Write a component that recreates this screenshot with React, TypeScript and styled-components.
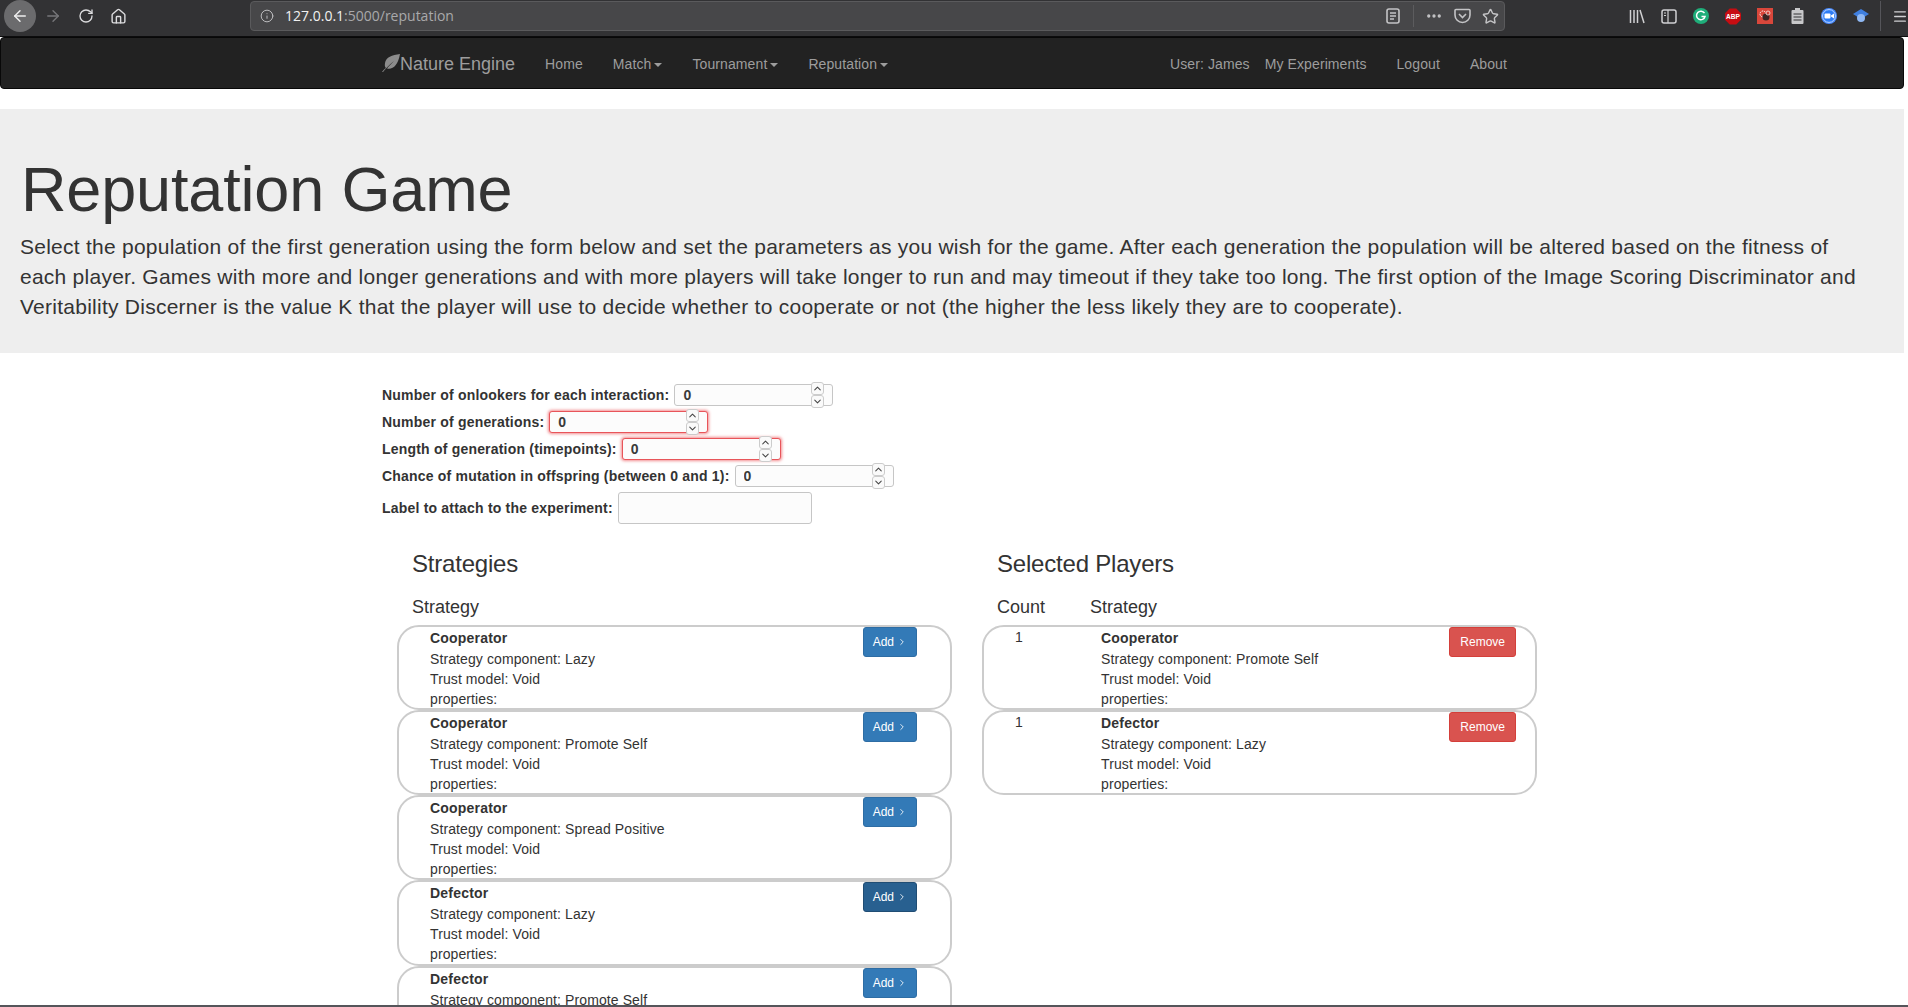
import React from "react";
import styled, { createGlobalStyle } from "styled-components";
import { ArrowLeft, ArrowRight, RotateCw, Home, Info as InfoIcon, MoreHorizontal, Star, Menu, ChevronUp, ChevronDown, ChevronRight } from "lucide-react";

const Global = createGlobalStyle`
  html, body { margin: 0; padding: 0; height: 100%; overflow: hidden; background: #fff; }
  body { font-family: "Liberation Sans", Arial, sans-serif; font-size: 14px; line-height: 20px; color: #333; letter-spacing: .1px; }
  * { box-sizing: border-box; }
`;

const Shell = styled.div`
  height: 1007px; display: flex; flex-direction: column; overflow: hidden;
`;
const Toolbar = styled.div`
  flex: 0 0 37px; height: 37px; background: #323234; display: flex; align-items: center; color: #d0d0d2; padding-bottom: 4px;
  border-bottom: 1px solid #0c0c0d; letter-spacing: 0;
`;
const BackCircle = styled.div`
  width: 32px; height: 32px; margin-left: 4px; border-radius: 50%; background: #6b6b6d; display: flex; align-items: center; justify-content: center; color: #eee;
`;
const NavIcon = styled.div<{ $dim?: boolean }>`
  width: 33px; display: flex; justify-content: center; color: ${(p) => (p.$dim ? "#77777a" : "#dcdcde")};
`;
const UrlBar = styled.div`
  margin-left: 115px; width: 1255px; height: 30px; background: #474749; border: 1px solid #5a5a5c; border-radius: 4px;
  display: flex; align-items: center; padding: 0 0 0 9px; font-size: 14px; color: #a9a9ab; font-family: "Open Sans", sans-serif;
`;
const UrlInfo = styled.span`display: flex; color: #c4c4c6;`;
const Host = styled.span`color: #f1f1f1; margin-left: 11px;`;
const UrlSpacer = styled.div`flex: 1;`;
const UrlDivider = styled.div`width: 1px; height: 22px; background: #5c5c5e; margin: 0 6px 0 6px;`;
const UrlIcon = styled.div`display: flex; align-items: center; color: #c4c4c6; width: 28px; justify-content: center;`;
const ToolIcons = styled.div`
  margin-left: auto; display: flex; align-items: center; gap: 16px;
`;
const ToolSlot = styled.div`width: 16px; height: 18px; display: flex; align-items: center; justify-content: center; color: #d0d0d2;`;
const ToolDivider = styled.div`width: 1px; height: 30px; background: #55555a; margin: 0 -5px;`;
const AbpText = styled.text`font: bold 7px "Liberation Sans", sans-serif; fill: #fff;`;

const Viewport = styled.div`flex: 1; min-height: 0; padding-right: 4px; overflow: hidden;`;

const Navbar = styled.nav`
  height: 52px; background: #222; border: 1px solid #080808; border-radius: 4px; margin-bottom: 20px;
`;
const NavContainer = styled.div`
  width: 1170px; margin: 0 auto; padding: 2px 15px 0; display: flex; height: 100%; align-items: center; color: #9d9d9d;
`;
const Brand = styled.a`
  font-size: 18px; line-height: 20px; padding-right: 15px; display: flex; align-items: center; color: #9d9d9d; letter-spacing: 0;
`;
const Leaf = styled.svg`flex: none; margin-top: -2px; color: #8c8c8c;`;
const NavLink = styled.a<{ $pad?: string }>`
  padding: ${(p) => p.$pad ?? "0 15px"}; white-space: nowrap; color: #9d9d9d; display: flex; align-items: center;
`;
const Caret = styled.span`
  display: inline-block; margin-left: 3px; margin-top: 1px; border-top: 4px solid #9d9d9d; border-left: 4px solid transparent; border-right: 4px solid transparent;
`;
const NavRight = styled.div`margin-left: auto; display: flex;`;

const Jumbotron = styled.header`
  height: 244px; background: #eee; padding: 46px 20px 0 20px;
`;
const Title = styled.h1`
  font-size: 63px; font-weight: 400; line-height: 69px; margin: 0 0 0 1px; color: #333; letter-spacing: -.16px;
`;
const Lead = styled.p`
  font-size: 21px; line-height: 30px; margin: 8px 0 0; color: #333; font-weight: 400; letter-spacing: .25px; max-width: 1845px;
`;

const Container = styled.div`width: 1170px; margin: 0 auto;`;
const Form = styled.form`padding: 28px 15px 0; display: flex; flex-direction: column;`;
const FormRow = styled.div<{ $h?: number }>`
  height: ${(p) => p.$h ?? 27}px; display: flex; align-items: center; gap: 5px;
`;
const Label = styled.label`font-weight: 700; white-space: nowrap; letter-spacing: .2px;`;
const NumWrap = styled.div<{ $invalid?: boolean }>`
  position: relative; width: 159px; height: 22px; border-radius: 3px; background: #fcfcfc;
  border: 1px solid ${(p) => (p.$invalid ? "#e8555a" : "#c6c6c6")};
  box-shadow: ${(p) => (p.$invalid ? "0 0 3px 1px rgba(235, 80, 85, .65)" : "none")};
`;
const NumInput = styled.input`
  width: 100%; height: 100%; border: 0; outline: 0; background: transparent; padding: 0 0 0 8px; font: 700 14px "Liberation Sans", sans-serif; color: #3a3a3a;
`;
const Spinner = styled.div`
  position: absolute; top: -3px; right: 8px; width: 13px; height: 25px; display: flex; flex-direction: column;
`;
const SpinBtn = styled.div`
  flex: 1; border: 1px solid #ccc; border-radius: 3px; background: #fafafa; display: flex; align-items: center; justify-content: center; color: #444;
`;
const TextInput = styled.input`
  width: 194px; height: 32px; border: 1px solid #c6c6c6; border-radius: 3px; background: #fcfcfc; outline: 0;
`;

const Columns = styled.div`
  display: grid; grid-template-columns: 555px 555px; gap: 30px; padding: 25px 0 0 30px;
`;
const Column = styled.section`display: flex; flex-direction: column;`;
const Heading = styled.h3`
  font-size: 24px; font-weight: 400; line-height: 26px; margin: 0 0 20px 15px; color: #333; letter-spacing: -.2px;
`;
const TableHead = styled.div`
  font-size: 18px; line-height: 20px; margin: 0 0 8px 15px; display: flex; color: #333; height: 20px; letter-spacing: 0;
`;
const CountHead = styled.span`width: 93px;`;
const Card = styled.div`
  height: 85.15px; flex: none; border: 2px solid #ccc; border-radius: 22px; display: flex; align-items: flex-start; background: #fff; overflow: hidden;
`;
const CountCell = styled.div`width: 117px; padding: 0 0 0 31px; line-height: 21px;`;
const Details = styled.div<{ $inset: number }>`
  margin-left: ${(p) => p.$inset}px; line-height: 20px;
`;
const Name = styled.div`font-weight: 700; letter-spacing: .2px; line-height: 22px;`;
const Action = styled.button<{ $kind: "add" | "active" | "remove"; $right: number; $pad: number }>`
  margin: 0 ${(p) => p.$right}px 0 auto; height: 30px; padding: 0 ${(p) => p.$pad}px; font: 12px/18px "Liberation Sans", sans-serif; color: #fff; border-radius: 3px; display: flex; align-items: center; gap: 3px;
  background: ${(p) => (p.$kind === "add" ? "#337ab7" : p.$kind === "active" ? "#286090" : "#d9534f")};
  border: 1px solid ${(p) => (p.$kind === "add" ? "#2e6da4" : p.$kind === "active" ? "#204d74" : "#d43f3a")};
`;
const BottomEdge = styled.div`flex: 0 0 2px; background: #55555a;`;

type Strat = { name: string; comp: string; kind?: "add" | "active" };
const strategies: Strat[] = [
  { name: "Cooperator", comp: "Lazy" },
  { name: "Cooperator", comp: "Promote Self" },
  { name: "Cooperator", comp: "Spread Positive" },
  { name: "Defector", comp: "Lazy", kind: "active" },
  { name: "Defector", comp: "Promote Self" },
];
const selected: Strat[] = [
  { name: "Cooperator", comp: "Promote Self" },
  { name: "Defector", comp: "Lazy" },
];

const Num = ({ label, invalid }: { label: string; invalid?: boolean }) => (
  <FormRow>
    <Label>{label}</Label>
    <NumWrap $invalid={invalid}>
      <NumInput readOnly value="0" />
      <Spinner>
        <SpinBtn><ChevronUp size={11} strokeWidth={2.2} /></SpinBtn>
        <SpinBtn><ChevronDown size={11} strokeWidth={2.2} /></SpinBtn>
      </Spinner>
    </NumWrap>
  </FormRow>
);

const StrategyDetails = ({ s, inset }: { s: Strat; inset: number }) => (
  <Details $inset={inset}>
    <Name>{s.name}</Name>
    <div>Strategy component: {s.comp}</div>
    <div>Trust model: Void</div>
    <div>properties:</div>
  </Details>
);

export default function App() {
  return (
    <Shell>
      <Global />
      <Toolbar>
        <BackCircle><ArrowLeft size={18} strokeWidth={2} /></BackCircle>
        <NavIcon $dim><ArrowRight size={18} strokeWidth={1.8} /></NavIcon>
        <NavIcon><RotateCw size={16} strokeWidth={2} /></NavIcon>
        <NavIcon><Home size={17} strokeWidth={2} /></NavIcon>
        <UrlBar>
          <UrlInfo><InfoIcon size={14} strokeWidth={1.6} /></UrlInfo>
          <Host>127.0.0.1</Host>:5000/reputation
          <UrlSpacer />
          <UrlIcon>
            <svg width="14" height="16" viewBox="0 0 14 16"><rect x="1" y="1" width="12" height="14" rx="2" fill="none" stroke="currentColor" strokeWidth="1.6" /><path d="M4 5h6M4 8h6M4 11h4" stroke="currentColor" strokeWidth="1.3" /></svg>
          </UrlIcon>
          <UrlDivider />
          <UrlIcon><MoreHorizontal size={18} strokeWidth={2.4} /></UrlIcon>
          <UrlIcon>
            <svg width="17" height="16" viewBox="0 0 17 16"><path d="M2 1.500h13a1 1 0 0 1 1 1V7a7.500 7.500 0 0 1-15 0V2.500a1 1 0 0 1 1-1z" fill="none" stroke="currentColor" strokeWidth="1.6" /><path d="M5 6l3.500 3.500L12 6" fill="none" stroke="currentColor" strokeWidth="1.6" /></svg>
          </UrlIcon>
          <UrlIcon><Star size={17} strokeWidth={2} /></UrlIcon>
        </UrlBar>
        <ToolIcons>
          <ToolSlot>
            <svg width="16" height="15" viewBox="0 0 16 15"><path d="M1.500 1v13M5 1v13M8.500 1v13M11 1l4 13" stroke="currentColor" strokeWidth="1.500" fill="none" /></svg>
          </ToolSlot>
          <ToolSlot>
            <svg width="16" height="15" viewBox="0 0 16 15"><rect x="1" y="1" width="14" height="13" rx="2" fill="none" stroke="currentColor" strokeWidth="1.500" /><path d="M7 1v13M3 4h2M3 6.500h2" stroke="currentColor" strokeWidth="1.200" /></svg>
          </ToolSlot>
          <ToolSlot>
            <svg width="16" height="16" viewBox="0 0 16 16"><circle cx="8" cy="8" r="8" fill="#1fae7a" /><path d="M11.500 5.200A4.300 4.300 0 1 0 12 8.500H8.500" fill="none" stroke="#fff" strokeWidth="1.500" /></svg>
          </ToolSlot>
          <ToolSlot>
            <svg width="17" height="17" viewBox="0 0 17 17"><path d="M5 0h7l5 5v7l-5 5H5l-5-5V5z" fill="#c70d12" /><AbpText x="8.500" y="11" textAnchor="middle">ABP</AbpText></svg>
          </ToolSlot>
          <ToolSlot>
            <svg width="16" height="16" viewBox="0 0 16 16"><rect width="16" height="16" fill="#d9473b" /><circle cx="6" cy="6" r="3" fill="none" stroke="#fff" strokeWidth="1" strokeDasharray="1.500 1" /><circle cx="9" cy="9" r="3.500" fill="#3b2523" /><circle cx="11" cy="5" r="2" fill="none" stroke="#f3c7c3" strokeWidth="1" /></svg>
          </ToolSlot>
          <ToolSlot>
            <svg width="13" height="16" viewBox="0 0 13 16"><rect x="0.500" y="2" width="12" height="14" rx="1" fill="#c8c8ca" /><rect x="4" y="0" width="5" height="3" fill="#c8c8ca" /><path d="M2.500 6h8M2.500 9h8M2.500 12h8" stroke="#323234" strokeWidth="1.200" /></svg>
          </ToolSlot>
          <ToolSlot>
            <svg width="16" height="16" viewBox="0 0 16 16"><circle cx="8" cy="8" r="8" fill="#4a8cff" /><circle cx="8" cy="8" r="6.400" fill="#2d7cf6" stroke="#b9d4ff" strokeWidth="1" /><rect x="3.500" y="5.500" width="6" height="5" rx="1" fill="#fff" /><path d="M10 7.500l3-2v5l-3-2z" fill="#fff" /></svg>
          </ToolSlot>
          <ToolSlot>
            <svg width="16" height="16" viewBox="0 0 16 16"><path d="M8 1l8 5-8 5-8-5z" fill="#3f7fe0" /><circle cx="8" cy="10" r="4" fill="#8fb8f4" /></svg>
          </ToolSlot>
          <ToolDivider />
          <ToolSlot><Menu size={17} strokeWidth={2} /></ToolSlot>
        </ToolIcons>
      </Toolbar>
      <Viewport>
        <Navbar>
          <NavContainer>
            <Brand>
              <Leaf width="18" height="18" viewBox="0 0 18 18"><path d="M18 0C10 1 4 3 3 9c-.5 3 0 4 1 5-1.500 1-3 2.500-4 4h1c2-2.500 6-7 11-11-4 4-6 6-7 7.500C11 16 16 11 18 0z" fill="currentColor" /></Leaf>
              Nature Engine
            </Brand>
            <NavLink>Home</NavLink>
            <NavLink>Match<Caret /></NavLink>
            <NavLink>Tournament<Caret /></NavLink>
            <NavLink>Reputation<Caret /></NavLink>
            <NavRight>
              <NavLink $pad="0 15px 0 0">User: James</NavLink>
              <NavLink $pad="0 30px 0 0">My Experiments</NavLink>
              <NavLink $pad="0 15px 0 0">Logout</NavLink>
              <NavLink>About</NavLink>
            </NavRight>
          </NavContainer>
        </Navbar>
        <Jumbotron>
          <Title>Reputation Game</Title>
          <Lead>
            Select the population of the first generation using the form below and set the parameters as you wish for the game. After each generation the population will be altered based on the fitness of each player. Games with more and longer generations and with more players will take longer to run and may timeout if they take too long. The first option of the Image Scoring Discriminator and Veritability Discerner is the value K that the player will use to decide whether to cooperate or not (the higher the less likely they are to cooperate).
          </Lead>
        </Jumbotron>
        <Container>
          <Form>
            <Num label="Number of onlookers for each interaction:" />
            <Num label="Number of generations:" invalid />
            <Num label="Length of generation (timepoints):" invalid />
            <Num label="Chance of mutation in offspring (between 0 and 1):" />
            <FormRow $h={37}>
              <Label>Label to attach to the experiment:</Label>
              <TextInput readOnly />
            </FormRow>
          </Form>
          <Columns>
            <Column>
              <Heading>Strategies</Heading>
              <TableHead>Strategy</TableHead>
              {strategies.map((s, i) => (
                <Card key={i}>
                  <StrategyDetails s={s} inset={31} />
                  <Action $kind={s.kind ?? "add"} $right={33} $pad={9}>Add <ChevronRight size={10} strokeWidth={2} /></Action>
                </Card>
              ))}
            </Column>
            <Column>
              <Heading>Selected Players</Heading>
              <TableHead><CountHead>Count</CountHead>Strategy</TableHead>
              {selected.map((s, i) => (
                <Card key={i}>
                  <CountCell>1</CountCell>
                  <StrategyDetails s={s} inset={0} />
                  <Action $kind="remove" $right={19} $pad={10}>Remove</Action>
                </Card>
              ))}
            </Column>
          </Columns>
        </Container>
      </Viewport>
      <BottomEdge />
    </Shell>
  );
}
